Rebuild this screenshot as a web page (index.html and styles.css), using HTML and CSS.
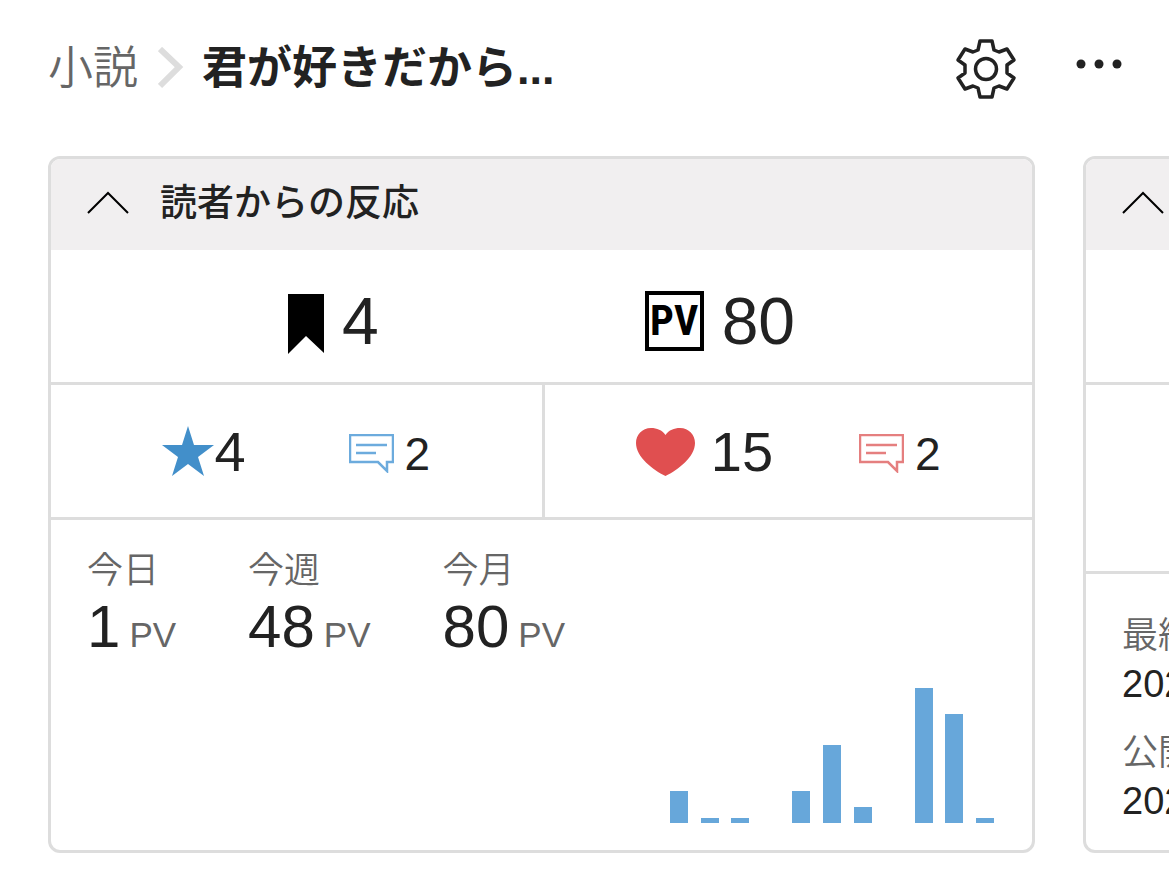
FILE: index.html
```html
<!DOCTYPE html>
<html lang="ja">
<head>
    <meta charset="UTF-8">
    <meta name="viewport" content="width=device-width, initial-scale=1">
    <title>君が好きだから...</title>
    <link rel="stylesheet" href="styles.css">
</head>
<body>
    <header class="page-header">
      <nav class="breadcrumb">
        <a href="#">小説</a>
        <svg class="separator" width="26" height="44" viewBox="0 0 26 44"><path d="M2 2L21 20L2 39" fill="none" stroke="#ddd" stroke-width="6"/></svg>
        <h1>君が好きだから...</h1>
      </nav>
      <div class="actions">
        <button type="button" aria-label="設定">
          <svg width="64" height="64" viewBox="-32 -32 64 64" fill="none" stroke="#222" stroke-width="3.500" stroke-linejoin="round">
            <path d="M-6 -28H6L8 -19L13 -17L21 -20L28 -9L21 -4V4L28 9L21 20L13 17L8 19L6 28H-6L-8 19L-13 17L-21 20L-28 9L-21 4V-4L-28 -9L-21 -20L-13 -17L-8 -19Z"/>
            <circle r="10.500"/>
          </svg>
        </button>
        <button type="button" aria-label="メニュー">
          <svg width="48" height="20" viewBox="0 0 48 20" fill="#222"><circle cx="6" cy="5" r="4.500"/><circle cx="24" cy="5" r="4.500"/><circle cx="42" cy="5" r="4.500"/></svg>
        </button>
      </div>
    </header>

    <main class="cards">
      <section class="card">
        <div class="card-header">
          <button type="button" aria-label="閉じる">
            <svg width="44" height="26" viewBox="0 0 44 26"><path d="M2 24L22 4L42 24" fill="none" stroke="#000" stroke-width="2"/></svg>
          </button>
          <h2>読者からの反応</h2>
        </div>

        <div class="totals">
          <div class="total">
            <svg width="36" height="66" viewBox="0 0 36 66"><path d="M0 6H36V65L18 48L0 66Z"/></svg>
            <span>4</span>
          </div>
          <div class="total">
            <span class="pv-icon">PV</span>
            <span>80</span>
          </div>
        </div>

        <div class="reactions">
          <div class="reaction stars">
            <div class="count star">
              <svg width="52" height="50" viewBox="0 0 52 50"><path d="M26 0L32 19H52L36 31L42 50L26 38L10 50L16 31L0 19H20Z" fill="#428fca"/></svg>
              <span>4</span>
            </div>
            <div class="count comment blue">
              <svg width="45" height="39" viewBox="0 0 45 39" fill="none" stroke="currentColor" stroke-width="2.500"><path d="M1 1H44V28H38V37L29 28H1ZM7 11H38M7 19H27"/></svg>
              <span>2</span>
            </div>
          </div>
          <div class="reaction hearts">
            <div class="count heart">
              <svg width="59" height="49" viewBox="0 0 59 49"><path d="M29.500 8C33 3 38 1 44 1C53 1 59 8 59 16C59 30 42 43 29.500 49C17 43 0 30 0 16C0 8 6 1 15 1C21 1 26 3 29.500 8Z" fill="#e04f50"/></svg>
              <span>15</span>
            </div>
            <div class="count comment red">
              <svg width="45" height="39" viewBox="0 0 45 39" fill="none" stroke="currentColor" stroke-width="2.500"><path d="M1 1H44V28H38V37L29 28H1ZM7 11H38M7 19H27"/></svg>
              <span>2</span>
            </div>
          </div>
        </div>

        <div class="access">
          <dl class="stats">
            <div><dt>今日</dt><dd>1 <small>PV</small></dd></div>
            <div><dt>今週</dt><dd>48 <small>PV</small></dd></div>
            <div><dt>今月</dt><dd>80 <small>PV</small></dd></div>
          </dl>
          <div class="chart">
            <span style="height:32px"></span>
            <span style="height:5px"></span>
            <span style="height:5px"></span>
            <span style="height:0px"></span>
            <span style="height:32px"></span>
            <span style="height:78px"></span>
            <span style="height:16px"></span>
            <span style="height:0px"></span>
            <span style="height:135px"></span>
            <span style="height:109px"></span>
            <span style="height:5px"></span>
          </div>
        </div>
      </section>

      <section class="card">
        <div class="card-header">
          <button type="button" aria-label="閉じる">
            <svg width="44" height="26" viewBox="0 0 44 26"><path d="M2 24L22 4L42 24" fill="none" stroke="#000" stroke-width="2"/></svg>
          </button>
        </div>
        <div class="totals"></div>
        <div class="blank"></div>
        <dl class="dates">
          <dt>最終</dt>
          <dd>202</dd>
          <dt>公開</dt>
          <dd>202</dd>
        </dl>
      </section>
    </main>
</body>
</html>
```

FILE: styles.css
```css
* { box-sizing: border-box; }
body {
    margin: 0;
    color: #222;
    background: #fff;
    font-family: "Liberation Sans", "Noto Sans CJK JP", sans-serif;
    overflow-x: hidden;
}
h1, h2, dl, dd { margin: 0; }
svg { display: block; flex: none; }
button {
    padding: 0;
    border: 0;
    background: none;
    cursor: pointer;
}

.page-header {
    display: flex;
    justify-content: space-between;
    align-items: center;
    height: 156px;
    padding: 0 46px 18px 48px;
}
.breadcrumb { display: flex; align-items: center; font-size: 45px; line-height: 64px; }
.breadcrumb a { color: #666; text-decoration: none; font-weight: 350; }
.breadcrumb h1 { font-size: 45px; font-weight: bold; }
.separator { margin: 0 18px 0 20px; }
.actions { display: flex; align-items: center; gap: 57px; }

.cards { display: flex; gap: 48px; padding: 0 48px; overflow: hidden; }
.card {
    flex: 0 0 calc(100% - 86px);
    border: 3px solid #ddd;
    border-radius: 12px;
    overflow: hidden;
}
.card-header {
    display: flex;
    align-items: center;
    gap: 30px;
    height: 91px;
    padding: 0 35px 6px;
    background: #f1eff0;
}
.card-header h2 { padding-top: 4px; font-size: 37px; line-height: 54px; font-weight: 500; }

.totals {
    display: flex;
    justify-content: center;
    gap: 266px;
    height: 135px;
    padding-top: 9px;
    border-bottom: 3px solid #ddd;
    font-size: 66px;
}
.total { display: flex; align-items: center; gap: 18px; }
.pv-icon {
    width: 59px;
    height: 60px;
    border: 4px solid #000;
    color: #000;
    font: bold 42px/52px "Roboto Condensed", Roboto, sans-serif;
    text-align: center;
}

.reactions { display: flex; height: 135px; border-bottom: 3px solid #ddd; }
.reaction { flex: 1; display: flex; align-items: center; justify-content: center; }
.stars { flex: 0 0 calc(50% + 3px); gap: 103px; border-right: 3px solid #ddd; }
.hearts { gap: 86px; }
.count { display: flex; align-items: center; font-size: 56px; }
.heart { gap: 16px; }
.comment { gap: 11px; padding-top: 5px; font-size: 46px; }
.comment span { color: #222; }
.blue { color: #6cabdd; }
.red { color: #e57f7f; }

.access {
    display: flex;
    flex-direction: column;
    justify-content: space-between;
    height: 330px;
    padding: 23px 38px 27px 36px;
}
.stats { display: flex; gap: 72px; }
.stats dt, .dates dt { margin-bottom: 4px; color: #666; font: 350 36px/48px "Noto Sans CJK JP", sans-serif; }
.stats dd { display: flex; align-items: baseline; gap: 9px; font-size: 60px; line-height: 64px; }
.stats small { color: #666; font-size: 35px; }
.chart {
    display: flex;
    align-items: flex-end;
    justify-content: space-between;
    align-self: flex-end;
    width: 324px;
    height: 135px;
}
.chart span { width: 18px; background: #67a7da; }

.blank { height: 189px; border-bottom: 3px solid #ddd; }
.dates { padding: 34px 36px 20px; white-space: nowrap; }
.dates dd { font-size: 38px; line-height: 48px; }
.dates dd + dt { margin-top: 17px; }
```
